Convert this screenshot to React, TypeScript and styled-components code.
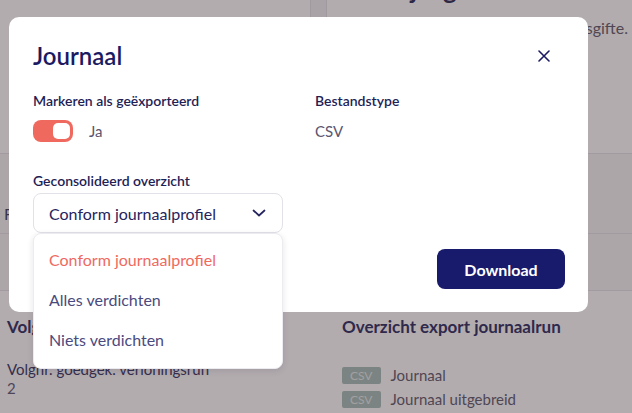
import { FunctionComponent } from 'react';
import styled, { createGlobalStyle } from 'styled-components';

const GlobalStyle = createGlobalStyle`
  html, body {
    margin: 0;
    padding: 0;
    overflow: hidden;
  }
  body {
    font-family: Lato, "Noto Sans", sans-serif;
    background: #f4f3f5;
    color: #1d1c5a;
  }
`;

const Page = styled.div`
  width: 632px;
  height: 413px;
  overflow: hidden;
  position: relative;
`;

const TopRow = styled.div`
  display: grid;
  grid-template-columns: 310px 17px 1fr;
  height: 153px;
  border-bottom: 1px solid #e4e2e6;
`;

const Card = styled.div`
  background: #ffffff;
  padding: 0 4px 0 ${p => p.$padLeft || 30}px;
`;

const Gap = styled.div`
  background: #f0eef1;
  border-left: 1px solid #e2e0e4;
  border-right: 1px solid #e2e0e4;
`;

const PageTitle = styled.h2`
  margin: -28px 0 0;
  font-size: 26px;
  font-weight: 700;
  color: #24234f;
  line-height: 34px;
`;

const Lead = styled.p`
  margin: 12px 0 0;
  font-size: 16px;
  line-height: 20px;
  color: #5d5866;
  text-align: right;
  white-space: nowrap;
`;

const Band = styled.div`
  background: #f6f6f6;
  height: ${p => p.$h}px;
  border-bottom: 1px solid #e4e2e6;
  display: flex;
  align-items: flex-end;
  padding: 0 0 10px 4px;
  box-sizing: border-box;
  font-size: 16px;
  color: #3a3656;
`;

const Bottom = styled.div`
  display: grid;
  grid-template-columns: 327px 1fr;
  background: #ffffff;
  height: 140px;
`;

const Section = styled.div`
  padding: ${p => p.$pad};
`;

const SectionTitle = styled.h3`
  margin: 0;
  font-size: 17px;
  font-weight: 700;
  color: #26255a;
  line-height: 24px;
`;

const Meta = styled.div`
  margin-top: 21px;
  font-size: 15px;
  line-height: 19px;
  color: #2e2d5c;
`;

const MetaValue = styled.div`
  font-size: 15px;
  line-height: 19px;
  color: #5a5470;
`;

const Files = styled.div`
  margin-top: 27px;
  display: flex;
  flex-direction: column;
  gap: 6px;
`;

const FileRow = styled.div`
  display: flex;
  align-items: center;
  gap: 10px;
  font-size: 15px;
  line-height: 18px;
  color: #5b5566;
`;

const Badge = styled.span`
  background: #a3bcb4;
  color: #e4ebe9;
  font-size: 12px;
  border-radius: 2px;
  padding: 1px 8px;
  line-height: 15px;
`;

const Overlay = styled.div`
  position: absolute;
  inset: 0;
  background: rgba(62, 47, 55, 0.4);
  padding: 17px 0 0 9px;
`;

const Modal = styled.div`
  width: 579px;
  height: 295px;
  box-sizing: border-box;
  background: #ffffff;
  border-radius: 10px;
  padding: 24px 23px 23px 24px;
  display: flex;
  flex-direction: column;
`;

const Header = styled.div`
  display: flex;
  justify-content: space-between;
  align-items: center;
  height: 30px;
`;

const Title = styled.h1`
  margin: 0;
  font-size: 24px;
  font-weight: 600;
  color: #1b1a63;
  line-height: 30px;
`;

const CloseButton = styled.button`
  border: 0;
  background: none;
  padding: 0;
  margin-right: 14px;
  width: 14px;
  height: 14px;
  display: flex;
  align-items: center;
  justify-content: center;
  cursor: pointer;
`;

const Fields = styled.div`
  margin-top: 20px;
  display: grid;
  grid-template-columns: 282px 1fr;
  row-gap: 28px;
`;

const Field = styled.div`
  display: flex;
  flex-direction: column;
  position: relative;
`;

const Label = styled.label`
  font-size: 14px;
  font-weight: 600;
  line-height: 20px;
  color: #1f1e55;
  margin-bottom: ${p => p.$gap || 8}px;
`;

const ToggleRow = styled.div`
  display: flex;
  align-items: center;
  gap: 16px;
  height: 24px;
`;

const Toggle = styled.span`
  width: 40px;
  height: 22px;
  border-radius: 8px;
  background: #f0695f;
  box-sizing: border-box;
  padding: 3px 3px 3px 0;
  display: flex;
  justify-content: flex-end;
`;

const Knob = styled.span`
  width: 17px;
  height: 16px;
  border-radius: 5px;
  background: #ffffff;
`;

const Value = styled.span`
  font-size: 15px;
  color: #5b5570;
  line-height: 24px;
`;

const Select = styled.div`
  width: 250px;
  height: 40px;
  box-sizing: border-box;
  border: 1px solid #e2e1e8;
  border-radius: 8px;
  padding: 0 16px 0 15px;
  display: flex;
  align-items: center;
  justify-content: space-between;
  font-size: 16px;
  color: #25245e;
`;

const Menu = styled.ul`
  position: absolute;
  top: 62px;
  left: 0;
  width: 250px;
  box-sizing: border-box;
  margin: 0;
  padding: 5px 0 9px;
  list-style: none;
  background: #ffffff;
  border: 1px solid #ececf0;
  border-radius: 8px;
  box-shadow: 0 2px 6px rgba(40, 30, 60, 0.12);
  z-index: 2;
`;

const Option = styled.li`
  height: 40px;
  display: flex;
  align-items: center;
  padding-left: 15px;
  font-size: 16px;
  color: ${p => (p.$active ? '#f0695f' : '#4b4a7e')};
`;

const Footer = styled.div`
  margin-top: 16px;
  display: flex;
  justify-content: flex-end;
`;

const DownloadButton = styled.button`
  width: 128px;
  height: 40px;
  border: 0;
  border-radius: 8px;
  background: #181b6b;
  color: #ffffff;
  font-family: inherit;
  font-size: 16px;
  font-weight: 700;
  cursor: pointer;
`;

const options = ['Conform journaalprofiel', 'Alles verdichten', 'Niets verdichten'];

const App: FunctionComponent = () => {
  return (
    <Page>
      <GlobalStyle />

      <TopRow>
        <Card $padLeft={30}>
          <PageTitle>Journaal</PageTitle>
        </Card>
        <Gap />
        <Card $padLeft={18}>
          <PageTitle>Leeftijdsgifte</PageTitle>
          <Lead>Overzicht van de leeftijdsgifte.</Lead>
        </Card>
      </TopRow>
      <Band $h={80}>Filteren</Band>
      <Band $h={57} />

      <Bottom>
        <Section $pad="24px 0 0 7px">
          <SectionTitle>Volgnummers</SectionTitle>
          <Meta>Volgnr. goedgek. verloningsrun</Meta>
          <MetaValue>2</MetaValue>
        </Section>
        <Section $pad="24px 0 0 15px">
          <SectionTitle>Overzicht export journaalrun</SectionTitle>
          <Files>
            <FileRow><Badge>CSV</Badge>Journaal</FileRow>
            <FileRow><Badge>CSV</Badge>Journaal uitgebreid</FileRow>
          </Files>
        </Section>
      </Bottom>

      <Overlay>
        <Modal>
          <Header>
            <Title>Journaal</Title>
            <CloseButton aria-label="Sluiten">
              <svg width="12" height="12" viewBox="0 0 12 12">
                <path d="M1 1 L11 11 M11 1 L1 11" stroke="#1b1a63" strokeWidth="1.6" strokeLinecap="round" />
              </svg>
            </CloseButton>
          </Header>

          <Fields>
            <Field>
              <Label>Markeren als geëxporteerd</Label>
              <ToggleRow>
                <Toggle><Knob /></Toggle>
                <Value>Ja</Value>
              </ToggleRow>
            </Field>
            <Field>
              <Label>Bestandstype</Label>
              <ToggleRow>
                <Value>CSV</Value>
              </ToggleRow>
            </Field>
            <Field>
              <Label $gap={2}>Geconsolideerd overzicht</Label>
              <Select>
                Conform journaalprofiel
                <svg width="14" height="8" viewBox="0 0 14 8">
                  <path d="M1.5 1.5 L7 6.5 L12.5 1.5" fill="none" stroke="#25245e" strokeWidth="1.7" strokeLinecap="round" strokeLinejoin="round" />
                </svg>
              </Select>
              <Menu>
                {options.map((o, i) => (
                  <Option key={o} $active={i === 0}>{o}</Option>
                ))}
              </Menu>
            </Field>
          </Fields>

          <Footer>
            <DownloadButton>Download</DownloadButton>
          </Footer>
        </Modal>
      </Overlay>
    </Page>
  );
};

export default App;
